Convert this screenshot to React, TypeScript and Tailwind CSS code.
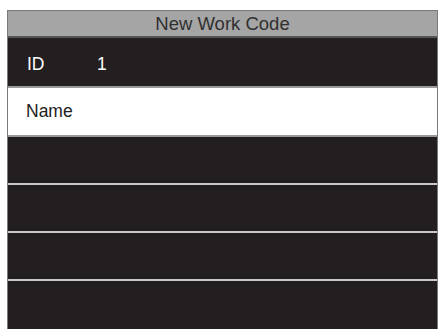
import React from 'react';

const DarkRow: React.FC<{ last?: boolean }> = ({ last }) => (
    <div className={`h-[48px] bg-[#231f20] ${last ? '' : 'border-b-2 border-[#c9c9c9]'}`} />
);

export default function App() {
    return (
        <div className="w-[439px] h-[329px] overflow-hidden bg-white pt-[10px] pl-[7px]" style={{ fontFamily: '"Liberation Sans", Arial, sans-serif' }}>
            <div className="w-[431px] border-x border-t border-[#7a7a7a] bg-[#231f20]">
                <div className="h-[27px] bg-[#a5a5a5] border-b-2 border-[#555] flex items-center justify-center text-[18.5px] text-[#303030]">
                    New Work Code
                </div>
                <div className="h-[50px] bg-[#231f20] flex items-center pt-[4px] text-white text-[17.5px] border-b-2 border-[#9a9a9a]">
                    <span className="pl-[19px] w-[89px]">ID</span>
                    <span>1</span>
                </div>
                <div className="h-[49px] bg-white flex items-center text-[17.5px] text-[#222] pl-[18px] border-b-2 border-[#9a9a9a]">
                    Name
                </div>
                <DarkRow />
                <DarkRow />
                <DarkRow />
                <DarkRow last />
            </div>
        </div>
    );
}
